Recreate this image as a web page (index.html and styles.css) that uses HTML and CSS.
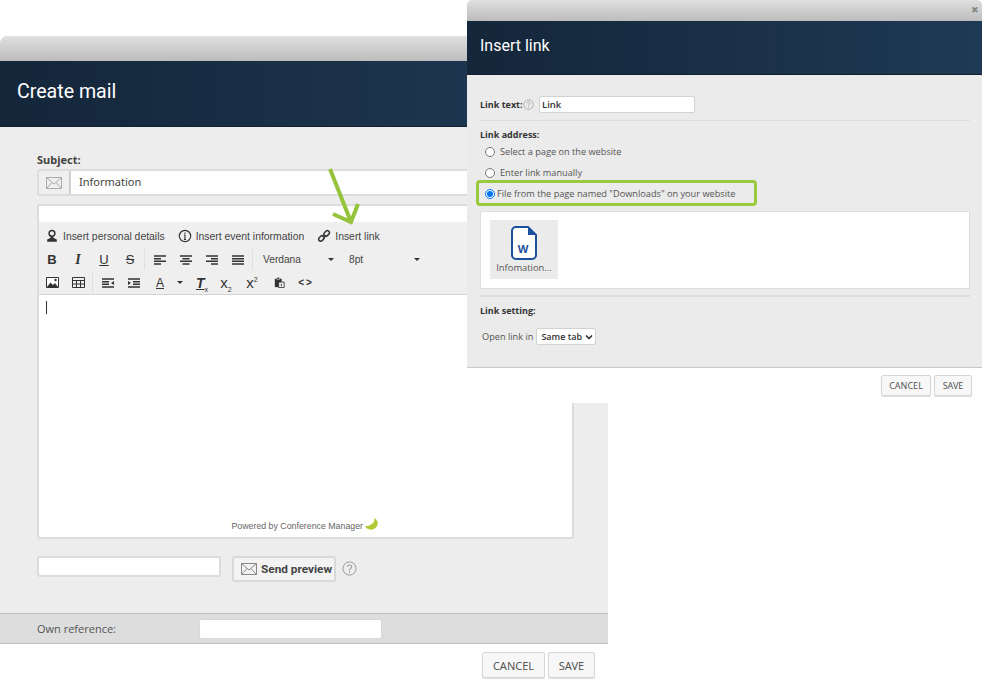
FILE: index.html
```html
<!DOCTYPE html>
<html lang="en">
<head>
  <meta charset="UTF-8">
  <title>Create mail</title>
  <link rel="stylesheet" href="styles.css">
</head>
<body>
  <svg class="sprite" width="0" height="0">
    <symbol id="i-mail" viewBox="0 0 16 12"><path d="M.5.5h15v11H.5zM.5.5 8 7l7.5-6.500M.5 11.500 6 5.500M15.500 11.500 10 5.500" fill="none" stroke="currentColor"/></symbol>
    <symbol id="i-help" viewBox="0 0 16 16"><circle cx="8" cy="8" r="7" fill="none" stroke="currentColor"/><path d="M5.800 6.200C5.800 3.500 10.300 3.500 10.300 6.100 10.300 7.800 8 7.800 8 9.800M8 11v1.500" fill="none" stroke="currentColor" stroke-width="1.100"/></symbol>
  </svg>

  <!-- main window -->
  <section class="window mail-window">
    <div class="titlebar"></div>
    <header class="head head-mail"><h1>Create mail</h1></header>
    <div class="mail-body">
      <label class="subject-label">Subject:</label>
      <div class="subject-group">
        <span class="subject-icon"><svg class="ic-mail"><use href="#i-mail"/></svg></span>
        <input class="subject-input" type="text" value="Information">
      </div>

      <div class="editor">
        <div class="editor-top"></div>
        <div class="toolbar">
          <div class="tb-row tb-links">
            <span class="tb-link">
              <svg class="ic" viewBox="0 0 16 16"><circle cx="8" cy="5" r="3.300" fill="none" stroke="#333" stroke-width="1.700"/><path d="M6.500 8.500v1.500L2.500 12v2.500h11V12l-4-2V8.500z" fill="#333"/></svg>
              Insert personal details
            </span>
            <span class="tb-link">
              <svg class="ic ic-info" viewBox="0 0 16 16"><circle cx="8" cy="8" r="6.500" fill="none" stroke="#333" stroke-width="1.300"/><path d="M8 4v2M8 7v5M6.800 7.200H8M6.800 12h2.400" fill="none" stroke="#333" stroke-width="1.300"/></svg>
              Insert event information
            </span>
            <span class="tb-link">
              <svg class="ic" viewBox="0 0 16 16"><path d="M6.500 9.500l3-3" stroke="#333" stroke-width="1.500"/><rect x="1.500" y="8.500" width="7" height="4.600" rx="2.300" transform="rotate(-45 5 10.800)" fill="none" stroke="#333" stroke-width="1.700"/><rect x="7.500" y="2.800" width="7" height="4.600" rx="2.300" transform="rotate(-45 11 5.100)" fill="none" stroke="#333" stroke-width="1.700"/></svg>
              Insert link
            </span>
          </div>

          <div class="tb-row">
            <span class="tb-btn tb-b">B</span>
            <span class="tb-btn tb-i">I</span>
            <span class="tb-btn tb-u">U</span>
            <span class="tb-btn tb-s">S</span>
            <span class="tb-sep"></span>
            <span class="tb-btn"><svg class="ic-line" viewBox="0 0 12 10"><path d="M0 1h12M0 3.700h7M0 6.300h12M0 9h7"/></svg></span>
            <span class="tb-btn"><svg class="ic-line" viewBox="0 0 12 10"><path d="M0 1h12M2.500 3.700h7M0 6.300h12M2.500 9h7"/></svg></span>
            <span class="tb-btn"><svg class="ic-line" viewBox="0 0 12 10"><path d="M0 1h12M5 3.700h7M0 6.300h12M5 9h7"/></svg></span>
            <span class="tb-btn"><svg class="ic-line" viewBox="0 0 12 10"><path d="M0 1h12M0 3.700h12M0 6.300h12M0 9h12"/></svg></span>
            <span class="tb-sep"></span>
            <span class="tb-select tb-font">Verdana<i class="caret"></i></span>
            <span class="tb-select tb-size">8pt<i class="caret"></i></span>
          </div>

          <div class="tb-row">
            <span class="tb-btn"><svg class="ic-pic" viewBox="0 0 13 11"><path d="M.5.500h12v10H.5z" fill="#fff" stroke="#333"/><path d="M1 10l3.500-4.500L7 8l2-2 3 4z" fill="#333"/><circle cx="9.500" cy="3" r="1.200" fill="#333"/></svg></span>
            <span class="tb-btn"><svg class="ic-pic" viewBox="0 0 13 11"><path d="M.5.500h12v10H.5zM.5 3.500h12M.5 7h12M4.500 3.500v7M8.500 3.500v7" fill="none" stroke="#333"/></svg></span>
            <span class="tb-sep tb-sep-short"></span>
            <span class="tb-btn"><svg class="ic-line" viewBox="0 0 12 10"><path d="M0 1h12M0 3.700h7M0 6.300h7M0 9h12"/><path class="solid" d="M12 3 9 5l3 2z"/></svg></span>
            <span class="tb-btn"><svg class="ic-line" viewBox="0 0 12 10"><path d="M0 1h12M5 3.700h7M5 6.300h7M0 9h12"/><path class="solid" d="M0 3l3 2-3 2z"/></svg></span>
            <span class="tb-btn tb-color">A</span>
            <i class="caret caret-color"></i>
            <span class="tb-btn tb-clear"><span><em>T</em><sub>x</sub></span></span>
            <span class="tb-btn tb-script"><span>x<sub>2</sub></span></span>
            <span class="tb-btn tb-script"><span>x<sup>2</sup></span></span>
            <span class="tb-btn tb-paste"><svg class="ic-pic" viewBox="0 0 12 13"><path d="M.5 2h8v10h-8z" fill="#333"/><path d="M3 .500h3V3H3z" fill="#333" stroke="#efefef" stroke-width=".600"/><path d="M5 6h6.500v6.500H5z" fill="#efefef" stroke="#333"/><path d="M8.200 8v3" stroke="#333"/></svg></span>
            <span class="tb-btn tb-code">&lt;&gt;</span>
          </div>
        </div>

        <div class="editor-content"><span class="cursor"></span></div>
        <div class="powered">
          Powered by Conference Manager
          <svg class="banana" viewBox="0 0 16 14"><path d="M11 0C12 4 9 8 1 9 3 13 10 14 13 10 16 7 15 2 11 0z" fill="#b2c937"/></svg>
        </div>
      </div>

      <div class="preview-row">
        <input class="preview-input" type="text">
        <button class="preview-btn"><svg class="ic-mail"><use href="#i-mail"/></svg>Send preview</button>
        <svg class="ic-help"><use href="#i-help"/></svg>
      </div>
    </div>

    <div class="ref-bar">
      <label class="ref-label">Own reference:</label>
      <input class="ref-input" type="text">
    </div>
    <div class="mail-footer">
      <button class="btn btn-large btn-cancel-large">CANCEL</button>
      <button class="btn btn-large">SAVE</button>
    </div>
  </section>

  <svg class="arrow" viewBox="0 0 40 62"><path d="M3 2 24 55M6 47l18 8 7-18" fill="none" stroke="#96c33c" stroke-width="4"/></svg>

  <!-- dialog on top -->
  <section class="window link-window">
    <div class="titlebar titlebar-link"><span class="close">&#10006;</span></div>
    <header class="head head-link"><h2>Insert link</h2></header>
    <div class="link-body">
      <div class="link-text-row">
        <label class="strong link-label">Link text:</label>
        <svg class="ic-help-small"><use href="#i-help"/></svg>
        <input class="link-input" type="text" value="Link">
      </div>
      <hr class="rule">
      <div class="strong addr-title">Link address:</div>
      <label class="radio-row"><input type="radio" name="target">Select a page on the website</label>
      <label class="radio-row"><input type="radio" name="target">Enter link manually</label>
      <label class="radio-row radio-selected"><input type="radio" name="target" checked>File from the page named "Downloads" on your website</label>

      <div class="file-box">
        <div class="file-item">
          <svg class="file-icon" viewBox="0 0 26 34"><path d="M5 1h12l8 8v20a4 4 0 0 1-4 4H5a4 4 0 0 1-4-4V5a4 4 0 0 1 4-4z" fill="#fff" stroke="#1c4f9c" stroke-width="2"/><path d="M17 1l8 8h-8z" fill="#1c4f9c"/></svg>
          <span class="file-letter">W</span>
          <span class="file-name">Infomation...</span>
        </div>
      </div>
      <hr class="rule rule-thick">
      <div class="strong setting-title">Link setting:</div>
      <div class="open-row">
        Open link in
        <span class="select-wrap">
          <select class="open-select"><option>Same tab</option></select>
          <svg class="chevron" viewBox="0 0 8 6"><path d="M1 1.500 4 4.500l3-3" fill="none" stroke="#222" stroke-width="1.500"/></svg>
        </span>
      </div>
    </div>
    <div class="link-footer">
      <button class="btn btn-cancel">CANCEL</button>
      <button class="btn btn-save">SAVE</button>
    </div>
  </section>
</body>
</html>
```

FILE: styles.css
```css
* {
  margin: 0;
  padding: 0;
  box-sizing: border-box;
}

body {
  position: relative;
  width: 982px;
  height: 687px;
  overflow: hidden;
  background: #fff;
  color: #444;
  font-family: "Open Sans", sans-serif;
}

.sprite {
  position: absolute;
}

.window {
  position: absolute;
  background: #fff;
}

.mail-window {
  left: 0;
  top: 36px;
  width: 608px;
  height: 651px;
}

.link-window {
  left: 467px;
  top: 0;
  width: 515px;
  height: 403px;
}

.titlebar {
  height: 25px;
  background: linear-gradient(#e0e0e0, #bcbcbc);
  border-radius: 7px 0 0 0;
}

.titlebar-link {
  display: flex;
  justify-content: flex-end;
  height: 21px;
  border-radius: 5px 5px 0 0;
}

.close {
  padding: 4px 3px 0 0;
  font-size: 9px;
  line-height: 12px;
  color: #888;
}

.head {
  background: linear-gradient(90deg, #14263a, #1f3a54);
  border-bottom: 1px solid #12202f;
  color: #fff;
}

.head-mail {
  height: 66px;
  padding: 16px 17px;
}

.head-mail h1 {
  font-size: 19.6px;
  line-height: 29px;
  font-weight: 400;
  font-family: Roboto, sans-serif;
}

.head-link {
  height: 54px;
  padding: 13px 13px;
}

.head-link h2 {
  font-size: 16px;
  line-height: 23px;
  font-weight: 400;
  font-family: Roboto, sans-serif;
}

/* create mail */
.mail-body {
  height: 486px;
  padding: 27px 34px 0 37px;
  background: #ededed;
  font-family: "Noto Sans", sans-serif;
}

.subject-label {
  display: block;
  height: 15px;
  font-size: 11px;
  line-height: 12px;
  font-weight: 700;
  color: #444;
}

.subject-group {
  display: flex;
  height: 27px;
  border: 2px solid #dcdcdc;
  border-radius: 3px;
  background: #fff;
}

.subject-icon {
  display: flex;
  align-items: center;
  justify-content: center;
  width: 32px;
  border-right: 2px solid #cfcfcf;
  background: #efefef;
  color: #aaa;
}

.ic-mail {
  width: 16px;
  height: 12px;
}

.subject-input {
  flex: 1;
  min-width: 0;
  height: 21px;
  padding-left: 8px;
  border: 0;
  outline: 0;
  font: 11px "Noto Sans", sans-serif;
  color: #444;
}

.editor {
  display: flex;
  flex-direction: column;
  height: 335px;
  margin-top: 8px;
  border: 2px solid #dcdcdc;
  border-radius: 3px;
  background: #fff;
}

.editor-top {
  height: 16px;
}

.toolbar {
  height: 73px;
  background: #efefef;
  border-bottom: 1px solid #d4d4d4;
  font-family: "Liberation Sans", sans-serif;
  font-size: 10.4px;
  color: #444;
}

.tb-row {
  display: flex;
  align-items: center;
  height: 23px;
}

.tb-links {
  gap: 13px;
  height: 26px;
  padding: 2px 0 0 6px;
}

.tb-link {
  display: flex;
  align-items: center;
  gap: 4px;
  white-space: nowrap;
}

.ic {
  width: 14px;
  height: 14px;
}

.tb-btn {
  display: flex;
  flex: none;
  align-items: center;
  justify-content: center;
  width: 26px;
  height: 23px;
  font-size: 13px;
  color: #333;
}

.tb-b {
  font-weight: 700;
}

.tb-i {
  font-family: "Liberation Serif", serif;
  font-style: italic;
  font-weight: 700;
  font-size: 14px;
}

.tb-u {
  text-decoration: underline;
}

.tb-s {
  text-decoration: line-through;
}

.tb-sep {
  flex: none;
  width: 1px;
  height: 21px;
  margin: 0 2px 0 1px;
  background: #e0e0e0;
}

.ic-line {
  width: 12px;
  height: 10px;
}

.ic-line path {
  fill: none;
  stroke: #333;
  stroke-width: 1.400;
}

.ic-line .solid {
  fill: #333;
  stroke: none;
}

.ic-pic {
  width: 13px;
  height: 11px;
}

.tb-select {
  display: flex;
  align-items: center;
  justify-content: space-between;
  flex: none;
  font-size: 10.2px;
  color: #444;
}

.tb-font {
  width: 79px;
  padding-left: 8px;
}

.tb-size {
  width: 86px;
  padding-left: 15px;
}

.caret {
  display: block;
  flex: none;
  width: 0;
  height: 0;
  border: 3px solid transparent;
  border-top: 3px solid #333;
  border-bottom: 0;
}

.caret-color {
  margin-left: 4px;
}

.tb-color {
  font-size: 12px;
  text-decoration: underline;
}

.tb-clear {
  margin: 0 -2px 0 6px;
  font-size: 14px;
}

.tb-clear em {
  font-weight: 700;
  text-decoration: underline;
}

.tb-clear sub,
.tb-script sub,
.tb-script sup {
  font-size: 7px;
  line-height: 0;
}

.tb-script {
  font-size: 15px;
}

.tb-paste {
  margin-left: 1px;
}

.tb-code {
  margin-left: 1px;
  font-size: 10px;
  font-weight: 700;
  letter-spacing: 2px;
}

.editor-content {
  flex: 1;
  padding: 6px 7px;
}

.cursor {
  display: block;
  width: 1px;
  height: 13px;
  background: #333;
}

.powered {
  display: flex;
  align-items: flex-end;
  justify-content: flex-end;
  gap: 1px;
  height: 20px;
  padding: 0 193px 6px 0;
  font-family: "Liberation Sans", sans-serif;
  font-size: 8.8px;
  line-height: 10px;
  color: #666;
}

.banana {
  width: 15px;
  height: 13px;
}

.preview-row {
  display: flex;
  align-items: flex-start;
  margin-top: 17px;
}

.preview-input {
  width: 184px;
  height: 21px;
  border: 2px solid #dcdcdc;
  border-radius: 3px;
  outline: 0;
}

.preview-btn {
  display: flex;
  align-items: center;
  gap: 4px;
  width: 104px;
  height: 26px;
  margin-left: 11px;
  padding-left: 7px;
  background: #f3f3f3;
  border: 2px solid #d8d8d8;
  border-radius: 3px;
  font: 700 11.8px Roboto, sans-serif;
  color: #444;
  white-space: nowrap;
}

.preview-btn .ic-mail {
  color: #888;
  flex: none;
}

.ic-help {
  width: 15px;
  height: 15px;
  margin: 5px 0 0 6px;
  color: #999;
}

.ref-bar {
  display: flex;
  align-items: center;
  height: 31px;
  padding-left: 37px;
  background: #dddddd;
  border-top: 1px solid #bfbfbf;
  border-bottom: 1px solid #bfbfbf;
}

.ref-label {
  width: 162px;
  font-size: 11px;
  color: #555;
}

.ref-input {
  width: 183px;
  height: 20px;
  border: 1px solid #d8d8d8;
  border-radius: 2px;
  outline: 0;
}

.mail-footer {
  display: flex;
  justify-content: flex-end;
  gap: 3px;
  padding: 8px 13px 0 0;
}

.btn {
  height: 21px;
  padding: 0;
  background: #f7f7f7;
  border: 1px solid #d6d6d6;
  border-radius: 2px;
  box-shadow: 0 1px 1px #ddd;
  font: 9px "Noto Sans", sans-serif;
  color: #555;
}

.btn-cancel {
  width: 50px;
}

.btn-save {
  width: 38px;
}

.btn-large {
  width: 47px;
  height: 26px;
  font-size: 11px;
}

.btn-cancel-large {
  width: 63px;
}

.arrow {
  position: absolute;
  left: 327px;
  top: 167px;
  width: 40px;
  height: 62px;
}

/* insert link */
.link-body {
  height: 293px;
  padding: 21px 12px 0 13px;
  background: #ebebeb;
  border-bottom: 1px solid #c8c8c8;
  font-family: "Open Sans", sans-serif;
  font-size: 9.2px;
  color: #555;
}

.strong {
  font-size: 9px;
  font-weight: 700;
  color: #333;
}

.link-text-row {
  display: flex;
  align-items: center;
  height: 17px;
}

.link-label {
  width: 43px;
  white-space: nowrap;
}

.ic-help-small {
  width: 11px;
  height: 11px;
  color: #999;
}

.link-input {
  width: 156px;
  height: 17px;
  margin-left: 5px;
  padding-left: 2px;
  border: 1px solid #d2d2d2;
  border-radius: 2px;
  outline: 0;
  font: 600 9.5px "Open Sans", sans-serif;
  color: #333;
}

.rule {
  height: 1px;
  margin-top: 7px;
  border: 0;
  background: #dcdcdc;
}

.rule-thick {
  height: 2px;
  margin-top: 6px;
}

.addr-title {
  margin-top: 7px;
  line-height: 13px;
}

.radio-row {
  display: flex;
  align-items: center;
  height: 21px;
  padding-left: 5px;
}

.radio-row input {
  width: 10px;
  height: 10px;
  margin: 0 5px 0 0;
}

.radio-selected input {
  margin-right: 2px;
}

.radio-selected {
  position: relative;
}

.radio-selected::before {
  content: "";
  position: absolute;
  box-sizing: border-box;
  left: -4px;
  top: -3px;
  width: 281px;
  height: 26px;
  border: 3px solid #9bc93d;
  border-radius: 4px;
}

.file-box {
  height: 78px;
  margin-top: 7px;
  padding: 8px 9px;
  background: #fff;
  border: 1px solid #dedede;
}

.file-item {
  position: relative;
  display: flex;
  flex-direction: column;
  align-items: center;
  width: 68px;
  height: 59px;
  padding-top: 6px;
  background: #ebebeb;
}

.file-icon {
  width: 26px;
  height: 34px;
}

.file-letter {
  position: absolute;
  top: 22px;
  left: -1px;
  width: 68px;
  text-align: center;
  font-size: 11px;
  line-height: 14px;
  font-weight: 700;
  color: #1c4f9c;
}

.file-name {
  margin-top: 2px;
  font-size: 9.4px;
  line-height: 12px;
  white-space: nowrap;
}

.setting-title {
  margin-top: 7px;
  line-height: 13px;
}

.open-row {
  display: flex;
  align-items: center;
  gap: 3px;
  margin-top: 11px;
  padding-left: 2px;
}

.select-wrap {
  position: relative;
  display: block;
  width: 60px;
  height: 17px;
}

.open-select {
  appearance: none;
  display: block;
  width: 60px;
  height: 17px;
  padding-left: 4px;
  background: #fff;
  border: 1px solid #d2d2d2;
  border-radius: 2px;
  font: 600 9px "Open Sans", sans-serif;
  color: #333;
}

.chevron {
  position: absolute;
  right: 3px;
  top: 6px;
  width: 8px;
  height: 6px;
}

.link-footer {
  display: flex;
  justify-content: flex-end;
  gap: 3px;
  height: 35px;
  padding: 7px 10px 0 0;
  background: #fff;
}
```
